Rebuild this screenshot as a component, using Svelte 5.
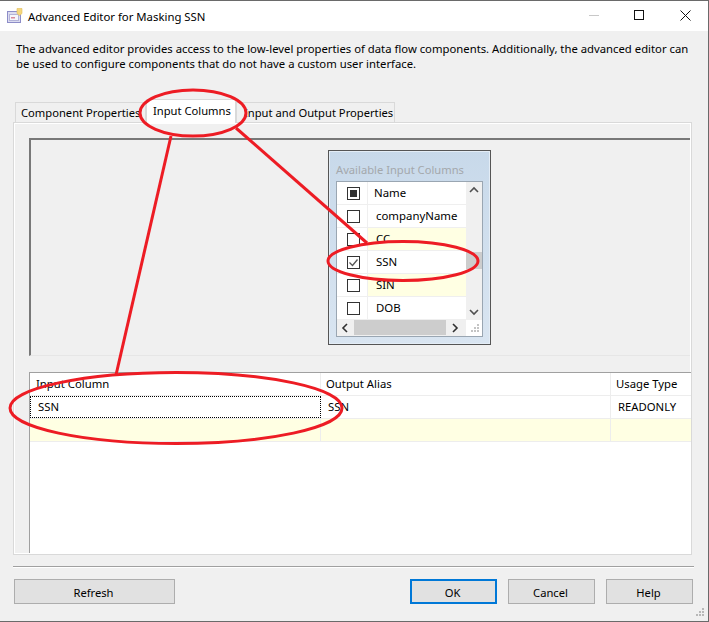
<script>
  const rows = [
    { name: 'companyName', tone: 'white', checked: false },
    { name: 'CC', tone: 'cream', checked: false },
    { name: 'SSN', tone: 'white', checked: true },
    { name: 'SIN', tone: 'cream', checked: false },
    { name: 'DOB', tone: 'white', checked: false }
  ];
</script>

<div class="window">
  <header class="titlebar">
    <svg class="appicon" viewBox="0 0 16 16" width="16" height="16" aria-hidden="true">
      <rect x="0.5" y="3.5" width="13" height="11" fill="#dcdcf0" stroke="#8d8dc8" />
      <rect x="2.5" y="6.5" width="9" height="6" fill="#f6f6fb" stroke="#b4b4d8" />
      <rect x="4" y="9" width="4" height="1.5" fill="#d88a9c" />
      <path d="M10 0.5h5v5l-2.5 2-2.5-2z" fill="#f5d77c" stroke="#e2bd5a" stroke-width="0.6" />
    </svg>
    <span class="title">Advanced Editor for Masking SSN</span>
    <div class="controls">
      <svg viewBox="0 0 149 30" width="149" height="30" aria-hidden="true">
        <path d="M30 14.5h10" stroke="#c8c8c8" fill="none" />
        <rect x="75.5" y="9.5" width="9" height="9" stroke="#111" fill="none" />
        <path d="M121.5 9.5l10 10M131.5 9.5l-10 10" stroke="#111" fill="none" />
      </svg>
    </div>
  </header>

  <p class="intro">The advanced editor provides access to the low-level properties of data flow components. Additionally, the advanced editor can be used to configure components that do not have a custom user interface.</p>

  <div class="tabs">
    <div class="tab first">Component Properties</div>
    <div class="tab active">Input Columns</div>
    <div class="tab last">Input and Output Properties</div>
  </div>

  <section class="panel">
    <div class="canvas">
      <div class="picker">
        <div class="picker-title">Available Input Columns</div>
        <div class="list">
          <div class="list-main">
            <div class="list-rows">
              <div class="lrow head">
                <div class="cbcell"><span class="cb mixed"></span></div>
                <div class="namecell headname">Name</div>
              </div>
              {#each rows as row}
                <div class="lrow {row.tone}">
                  <div class="cbcell">
                    <span class="cb">
                      {#if row.checked}
                        <svg viewBox="0 0 13 13" width="13" height="13" aria-hidden="true"><path d="M2.5 6.5l3 3 5-6" fill="none" stroke="#555" stroke-width="1.3" /></svg>
                      {/if}
                    </span>
                  </div>
                  <div class="namecell">{row.name}</div>
                </div>
              {/each}
            </div>
            <div class="vscroll">
              <svg viewBox="0 0 16 17" width="16" height="17" aria-hidden="true"><path d="M4 10l4-4 4 4" fill="none" stroke="#505050" stroke-width="1.6" /></svg>
              <div class="vthumb"></div>
              <svg class="down" viewBox="0 0 16 17" width="16" height="17" aria-hidden="true"><path d="M4 7l4 4 4-4" fill="none" stroke="#505050" stroke-width="1.6" /></svg>
            </div>
          </div>
          <div class="hscroll">
            <svg viewBox="0 0 17 16" width="17" height="16" aria-hidden="true"><path d="M10 4l-4 4 4 4" fill="none" stroke="#303030" stroke-width="1.6" /></svg>
            <div class="hthumb"></div>
            <svg class="right" viewBox="0 0 17 16" width="17" height="16" aria-hidden="true"><path d="M7 4l4 4-4 4" fill="none" stroke="#303030" stroke-width="1.6" /></svg>
            <svg class="grip" viewBox="0 0 16 16" width="16" height="16" aria-hidden="true"><path d="M11 4h2v2h-2zM8 7h2v2H8zM11 7h2v2h-2zM5 10h2v2H5zM8 10h2v2H8zM11 10h2v2h-2z" fill="#c4c4c4" /></svg>
          </div>
        </div>
      </div>
    </div>

    <div class="grid">
      <div class="grow ghead">
        <div class="c1">Input Column</div>
        <div class="c2">Output Alias</div>
        <div class="c3">Usage Type</div>
      </div>
      <div class="grow gdata">
        <div class="c1 focused">SSN</div>
        <div class="c2">SSN</div>
        <div class="c3">READONLY</div>
      </div>
      <div class="grow gblank">
        <div class="c1"></div>
        <div class="c2"></div>
        <div class="c3"></div>
      </div>
    </div>
  </section>

  <div class="rule"></div>

  <footer class="buttons">
    <button class="btn refresh">Refresh</button>
    <button class="btn ok">OK</button>
    <button class="btn">Cancel</button>
    <button class="btn">Help</button>
  </footer>

  <svg class="wingrip" viewBox="0 0 12 12" width="12" height="12" aria-hidden="true"><path d="M8 1h2v2H8zM5 4h2v2H5zM8 4h2v2H8zM2 7h2v2H2zM5 7h2v2H5zM8 7h2v2H8z" fill="#b8b8b8" /></svg>

  <svg class="marks" viewBox="0 0 709 622" width="709" height="622" aria-hidden="true">
    <g fill="none" stroke="#ed1c24" stroke-width="3">
      <ellipse cx="193" cy="113" rx="53" ry="23" />
      <ellipse cx="403" cy="261" rx="75" ry="19.5" />
      <ellipse cx="176" cy="408" rx="166" ry="35.5" />
      <path d="M171 136L116 375" />
      <path d="M236 128L367 243" />
    </g>
  </svg>
</div>

<style>
  :global(body) {
    margin: 0;
    background: #f0f0f0;
  }
  .window {
    position: relative;
    width: 709px;
    height: 622px;
    box-sizing: border-box;
    border-top: 1px solid #6a6a6a;
    border-right: 1px solid #6a6a6a;
    border-bottom: 1px solid #6a6a6a;
    background: #f0f0f0;
    display: flex;
    flex-direction: column;
    font-family: "Noto Sans", "Open Sans", sans-serif;
    font-size: 12px;
    color: #000;
    overflow: hidden;
  }
  .titlebar {
    height: 30px;
    background: #fff;
    display: flex;
    align-items: center;
    flex-shrink: 0;
  }
  .appicon {
    margin-left: 7px;
  }
  .title {
    margin-left: 5px;
    font-size: 11.35px;
  }
  .controls {
    margin-left: auto;
    height: 30px;
  }
  .controls svg {
    display: block;
  }
  .intro {
    margin: 10px 0 0 16px;
    width: 685px;
    line-height: 15px;
    font-size: 11.3px;
    height: 30px;
  }
  .tabs {
    margin: 31px 0 0 15px;
    height: 20px;
    display: flex;
    align-items: flex-end;
    position: relative;
    z-index: 1;
  }
  .tab {
    box-sizing: border-box;
    height: 20px;
    border: 1px solid #d9d9d9;
    border-bottom: 0;
    background: #f0f0f0;
    line-height: 20px;
    white-space: nowrap;
    font-size: 11.2px;
  }
  .first {
    width: 131px;
    padding-left: 5px;
  }
  .active {
    width: 90px;
    height: 24px;
    margin-bottom: -1px;
    background: #fff;
    padding-left: 6px;
    line-height: 22px;
    position: relative;
    z-index: 1;
  }
  .last {
    width: 159px;
    padding-left: 7px;
  }
  .panel {
    box-sizing: border-box;
    width: 679px;
    height: 433px;
    margin-left: 13px;
    border: 1px solid #d9d9d9;
    box-shadow: inset 0 0 0 1px #fff;
    padding: 15px 1px 2px 15px;
    display: flex;
    flex-direction: column;
    flex-shrink: 0;
  }
  .canvas {
    box-sizing: border-box;
    height: 218px;
    border-top: 2px solid #787878;
    border-left: 2px solid #787878;
    border-bottom: 1px solid #e6e6e6;
    padding: 10px 0 0 297px;
    flex-shrink: 0;
  }
  .picker {
    box-sizing: border-box;
    width: 163px;
    height: 195px;
    border: 1px solid #555;
    background: linear-gradient(#c8d9ea, #d9e5f1);
    padding: 0 7px 0 7px;
    box-shadow: inset 0 0 0 1px #e4edf6;
  }
  .picker-title {
    height: 30px;
    line-height: 38px;
    color: #a4a8ac;
    font-size: 11.2px;
    white-space: nowrap;
  }
  .list {
    box-sizing: border-box;
    width: 147px;
    height: 156px;
    border: 1px solid #9aa6b2;
    background: #fff;
  }
  .list-main {
    display: flex;
    height: 138px;
  }
  .list-rows {
    width: 129px;
    flex-shrink: 0;
  }
  .lrow {
    display: flex;
    height: 23px;
    box-sizing: border-box;
    border-bottom: 1px solid #efefef;
  }
  .lrow.cream {
    background: #ffffe3;
  }
  .lrow.head {
    height: 23px;
  }
  .cbcell {
    width: 31px;
    box-sizing: border-box;
    border-right: 1px solid #efefef;
    padding-left: 2px;
    display: flex;
    align-items: center;
    justify-content: center;
    background: #fff;
  }
  .cb {
    box-sizing: border-box;
    width: 13px;
    height: 13px;
    border: 1px solid #333;
    background: #fff;
    display: flex;
    align-items: center;
    justify-content: center;
  }
  .cb svg {
    flex-shrink: 0;
  }
  .cb.mixed {
    box-shadow: inset 0 0 0 2px #fff;
    background: #333;
  }
  .namecell {
    padding-left: 8px;
    line-height: 22px;
    font-size: 11.4px;
  }
  .headname {
    padding-left: 6px;
  }
  .vscroll {
    width: 16px;
    height: 138px;
    background: #f0f0f0;
    display: flex;
    flex-direction: column;
  }
  .vscroll svg,
  .hscroll svg {
    display: block;
    flex-shrink: 0;
  }
  .vthumb {
    width: 16px;
    height: 17px;
    margin-top: 53px;
    background: #cdcdcd;
  }
  .down {
    margin-top: auto;
  }
  .hscroll {
    height: 16px;
    background: #f0f0f0;
    display: flex;
  }
  .hthumb {
    width: 92px;
    height: 15px;
    background: #cdcdcd;
  }
  .right {
    margin-left: auto;
    margin-right: 3px;
  }
  .grip {
    background: #fff;
    margin-right: 0;
  }
  .grid {
    margin-top: 16px;
    box-sizing: border-box;
    width: 662px;
    height: 181px;
    background: #fff;
    border-top: 1px solid #a0a0a0;
    border-left: 1px solid #a0a0a0;
    flex-shrink: 0;
  }
  .grow {
    display: flex;
    box-sizing: border-box;
    height: 23px;
    border-bottom: 1px solid #ededed;
    line-height: 21px;
    font-size: 11.3px;
  }
  .gblank {
    background: #ffffe3;
  }
  .c1 {
    box-sizing: border-box;
    width: 291px;
    padding-left: 6px;
    border-right: 1px solid #ededed;
  }
  .c2 {
    box-sizing: border-box;
    width: 290px;
    padding-left: 5px;
    border-right: 1px solid #ededed;
  }
  .c3 {
    padding-left: 5px;
  }
  .gdata .c2 {
    padding-left: 7px;
  }
  .gdata .c3 {
    padding-left: 7px;
  }
  .focused {
    outline: 1px dotted #000;
    outline-offset: -1px;
    padding-left: 8px;
    border-right: 0;
  }
  .rule {
    margin: 11px 0 0 13px;
    width: 681px;
    height: 1px;
    background: #a0a0a0;
    border-bottom: 1px solid #fff;
    flex-shrink: 0;
  }
  .buttons {
    display: flex;
    margin: 11px 0 0 14px;
    width: 679px;
  }
  .btn {
    box-sizing: border-box;
    width: 87px;
    height: 25px;
    margin-left: 11px;
    padding: 1px 2px 0 0;
    border: 1px solid #adadad;
    background: #e1e1e1;
    font: inherit;
    font-size: 11.2px;
    color: #000;
  }
  .refresh {
    width: 161px;
    margin-left: 0;
    margin-right: 224px;
  }
  .ok {
    border: 2px solid #0078d7;
    margin-left: 11px;
  }
  .wingrip {
    position: absolute;
    right: 2px;
    bottom: 2px;
  }
  .marks {
    position: absolute;
    left: 0;
    top: -1px;
    z-index: 5;
    pointer-events: none;
  }
</style>
